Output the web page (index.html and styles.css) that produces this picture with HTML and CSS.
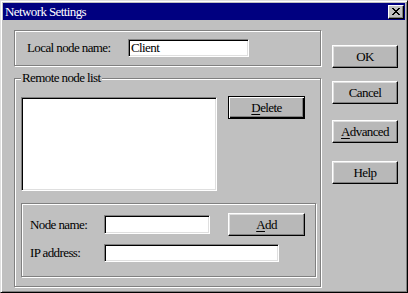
FILE: index.html
```html
<!DOCTYPE html>
<html lang="en">
  <head>
    <meta charset="UTF-8" />
    <title>Network Settings</title>
    <link rel="stylesheet" href="styles.css">
  </head>
  <body>
    <div class="window">
      <div class="titlebar">
        <span class="title">Network Settings</span>
        <button class="close" title="Close">
          <svg width="8" height="7" viewBox="0 0 8 7">
            <path d="M0 0h2v1h1v1h2v-1h1v-1h2v1h-1v1h-1v1h-1v1h1v1h1v1h1v1h-2v-1h-1v-1h-2v1h-1v1h-2v-1h1v-1h1v-1h1v-1h-1v-1h-1v-1h-1z" fill="#000" />
          </svg>
        </button>
      </div>

      <div class="content">
        <div class="left">
          <div class="group group-local">
            <label class="label label-local">Local node name:</label>
            <input class="field field-local" type="text" value="Client" />
          </div>

          <div class="group group-remote">
            <span class="caption">Remote node list</span>
            <div class="list-row">
              <div class="field listbox"></div>
              <button class="btn btn-default btn-wide"><u>D</u>elete</button>
            </div>
            <div class="group group-node">
              <div class="row row-name">
                <label class="label label-node">Node name:</label>
                <input class="field field-name" type="text" />
                <button class="btn btn-wide btn-add"><u>A</u>dd</button>
              </div>
              <div class="row row-ip">
                <label class="label label-node">IP address:</label>
                <input class="field field-ip" type="text" />
              </div>
            </div>
          </div>
        </div>

        <div class="right">
          <button class="btn btn-ok">OK</button>
          <button class="btn btn-cancel">Cancel</button>
          <button class="btn btn-advanced"><u>A</u>dvanced</button>
          <button class="btn btn-help">Help</button>
        </div>
      </div>
    </div>
  </body>
</html>
```

FILE: styles.css
```css
body {
  margin: 0;
  background-color: #c0c0c0;
  font-family: "Liberation Serif", "Times New Roman", serif;
  font-size: 13px;
  letter-spacing: -0.6px;
  color: #000;
}
.window {
  box-sizing: border-box;
  width: 408px;
  height: 293px;
  padding: 2px;
  border: 1px solid;
  border-color: #dfdfdf #000 #000 #dfdfdf;
  box-shadow: inset 1px 1px #fff, inset -1px -1px #808080;
  background-color: #c0c0c0;
}
.titlebar {
  height: 17px;
  display: flex;
  align-items: center;
  justify-content: space-between;
  padding-left: 2px;
  background-color: #000080;
  color: #fff;
}
.close {
  box-sizing: border-box;
  width: 16px;
  height: 14px;
  margin-right: 1px;
  padding: 0;
  display: flex;
  align-items: center;
  justify-content: center;
  background-color: #c0c0c0;
  border: 1px solid;
  border-color: #fff #000 #000 #fff;
  box-shadow: inset -1px -1px #808080;
}
.content {
  display: flex;
  padding: 10px 0 0 11px;
}
.left {
  width: 307px;
}
.right {
  width: 66px;
  margin-left: 11px;
  display: flex;
  flex-direction: column;
}

/* etched group boxes */
.group {
  box-sizing: border-box;
  border: 1px solid #808080;
  box-shadow: inset 1px 1px #fff, 1px 1px #fff;
}
.group-local {
  height: 36px;
  display: flex;
  align-items: center;
  padding-left: 12px;
}
.group-remote {
  height: 209px;
  margin-top: 12px;
  padding: 0 4px 0 6px;
  display: flex;
  flex-direction: column;
}
.caption {
  align-self: flex-start;
  height: 14px;
  line-height: 14px;
  margin-top: -8px;
  padding: 0 1px;
  background-color: #c0c0c0;
}
.list-row {
  display: flex;
  align-items: flex-start;
  margin-top: 11px;
}
.group-node {
  height: 74px;
  margin-top: 12px;
  padding: 9px 0 0 8px;
  display: flex;
  flex-direction: column;
  gap: 8px;
}
.row {
  display: flex;
  align-items: center;
}
.row-name {
  height: 23px;
}
.row-ip {
  height: 18px;
}

.label-local {
  width: 101px;
}
.label-node {
  width: 74px;
}

/* sunken fields */
.field {
  box-sizing: border-box;
  background-color: #fff;
  border: 1px solid;
  border-color: #808080 #fff #fff #808080;
  box-shadow: inset 1px 1px #000, inset -1px -1px #dfdfdf;
  font: inherit;
  letter-spacing: inherit;
  padding: 0 2px;
  outline: none;
}
.field-local {
  width: 121px;
  height: 18px;
}
.field-name {
  width: 106px;
  height: 19px;
}
.field-ip {
  width: 175px;
  height: 18px;
}
.listbox {
  width: 196px;
  height: 94px;
  margin-top: 1px;
  margin-right: 11px;
}

/* buttons */
.btn {
  box-sizing: border-box;
  width: 66px;
  height: 23px;
  padding: 0;
  font: inherit;
  letter-spacing: inherit;
  color: #000;
  background-color: #b8b8b8;
  border: 1px solid;
  border-color: #fff #000 #000 #fff;
  box-shadow: inset -1px -1px #808080, inset 1px 1px #dfdfdf;
}
.btn u {
  text-underline-offset: 2px;
}
.btn-wide {
  width: 77px;
}
.btn-default {
  border-color: #000;
  box-shadow: inset 1px 1px #fff, inset -1px -1px #000, inset -2px -2px #808080;
}
.btn-add {
  margin-left: 18px;
}
.btn-ok {
  margin-top: 15px;
}
.btn-cancel {
  margin-top: 13px;
}
.btn-advanced {
  margin-top: 16px;
}
.btn-help {
  margin-top: 18px;
}
```
